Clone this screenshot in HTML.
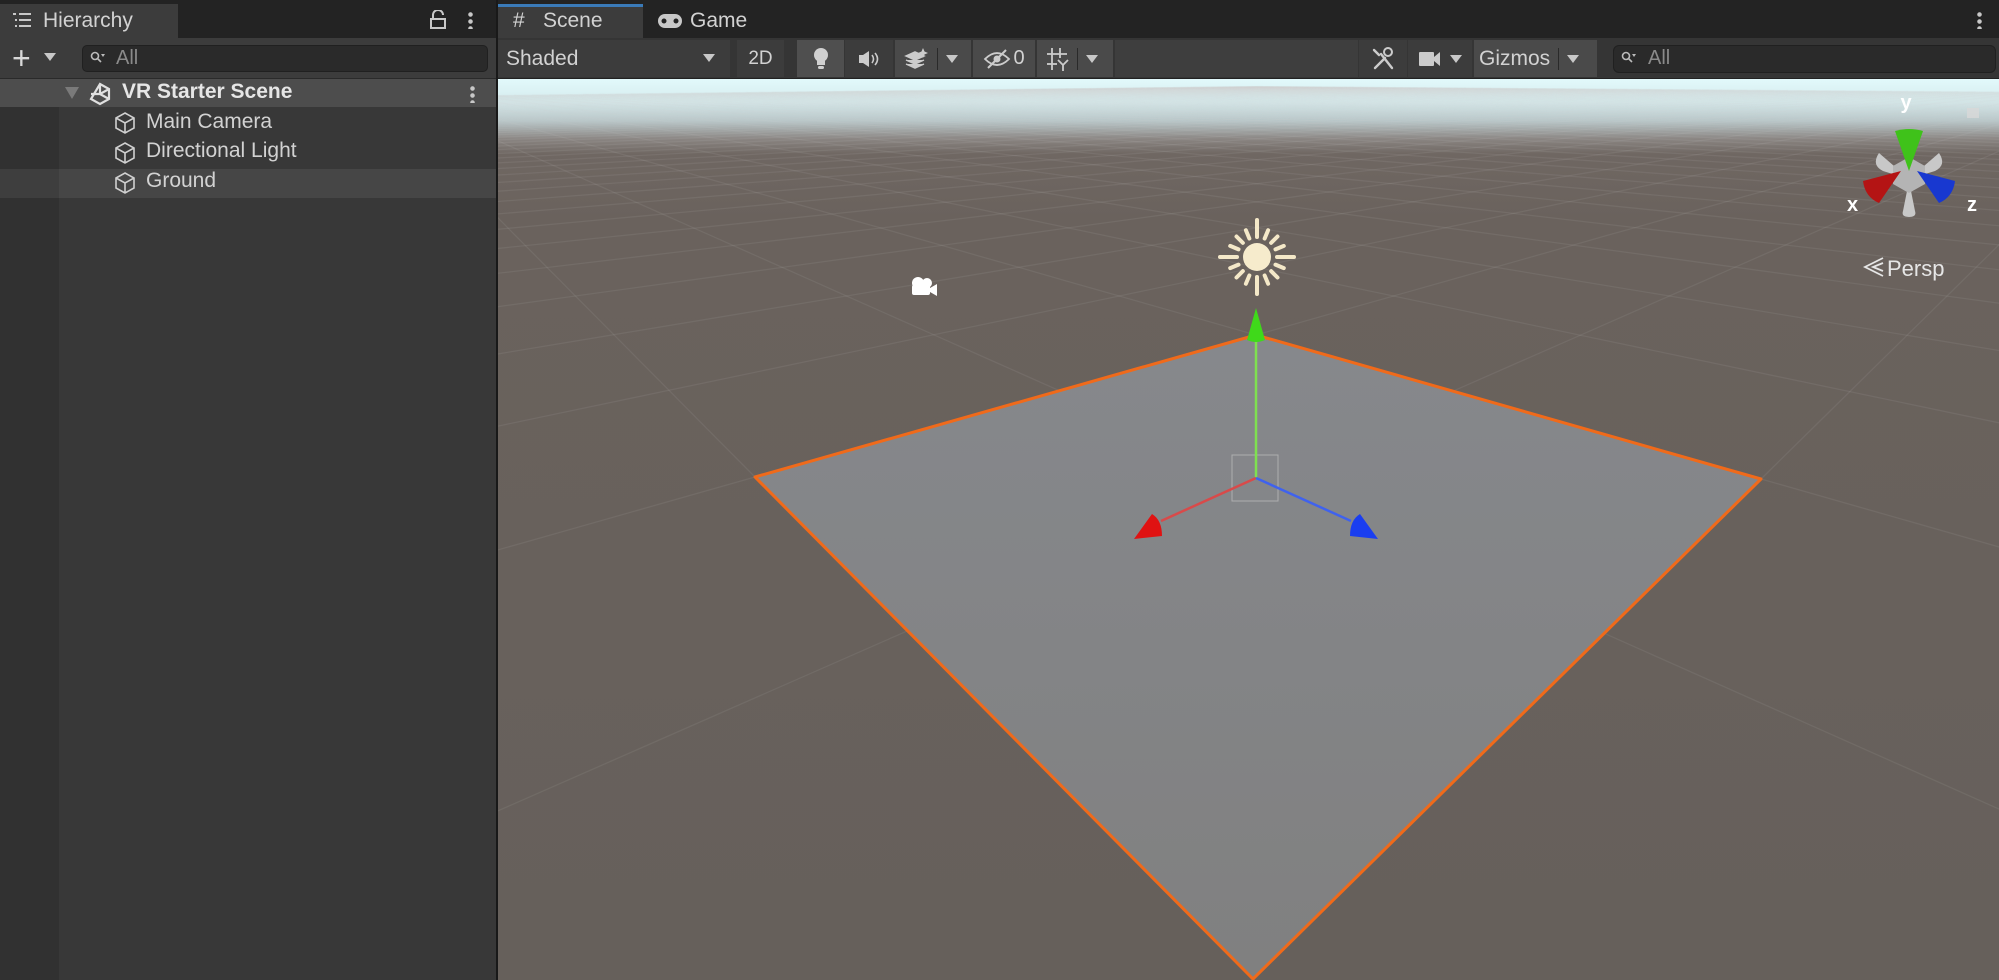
<!DOCTYPE html>
<html><head><meta charset="utf-8"><style>
*{margin:0;padding:0;box-sizing:border-box}
html,body{width:1999px;height:980px;overflow:hidden}
body{background:#191919;font-family:"Liberation Sans",sans-serif;color:#d2d2d2;font-size:21px;position:relative}
.a{position:absolute}
.btn{position:absolute;top:40px;height:37px;background:#3c3c3c;display:flex;align-items:center;justify-content:center}
</style></head><body>
<!-- tab bar -->
<div class="a" style="left:0;top:0;width:1999px;height:38px;background:#232323"></div>
<div class="a" style="left:0;top:4px;width:178px;height:34px;background:#3c3c3c"></div>
<svg class="a" style="left:13px;top:12px" width="20" height="16"><g stroke="#c8c8c8" stroke-width="2"><line x1="0" y1="2" x2="3" y2="2"/><line x1="6" y1="2" x2="18" y2="2"/><line x1="6" y1="8" x2="18" y2="8"/><line x1="6" y1="14" x2="18" y2="14"/><line x1="2" y1="8" x2="4" y2="8"/><line x1="2" y1="14" x2="4" y2="14"/></g></svg>
<div class="a" style="left:43px;top:9px">Hierarchy</div>
<svg class="a" style="left:430px;top:10px" width="16" height="20"><path d="M3 9 V5 a5 5 0 0 1 10 0" fill="none" stroke="#c8c8c8" stroke-width="2"/><rect x="1" y="9" width="14" height="9" fill="none" stroke="#c8c8c8" stroke-width="2"/></svg>
<div class="a" style="left:468px;top:11px;width:5px;height:18px;background:radial-gradient(circle,#c8c8c8 2px,transparent 2.5px) 0 0/5px 7px"></div>
<div class="a" style="left:498px;top:4px;width:145px;height:34px;background:#3c3c3c;border-top:3px solid #3a7ab8"></div>
<div class="a" style="left:513px;top:9px;font-size:21px">#</div>
<div class="a" style="left:543px;top:9px">Scene</div>
<svg class="a" style="left:657px;top:13px" width="26" height="16"><rect x="1" y="1" width="24" height="14" rx="7" fill="#c8c8c8"/><circle cx="7" cy="8" r="2.5" fill="#232323"/><circle cx="19" cy="8" r="2.5" fill="#232323"/></svg>
<div class="a" style="left:690px;top:9px">Game</div>
<div class="a" style="left:1977px;top:11px;width:5px;height:18px;background:radial-gradient(circle,#c8c8c8 2px,transparent 2.5px) 0 0/5px 7px"></div>

<!-- hierarchy -->
<div class="a" style="left:0;top:38px;width:496px;height:942px;background:#383838"></div>
<div class="a" style="left:0;top:38px;width:496px;height:41px;background:#3c3c3c;border-bottom:1px solid #2a2a2a"></div>
<div class="a" style="left:12px;top:42px;font-size:32px;color:#d8d8d8;line-height:32px">+</div>
<div class="a" style="left:44px;top:53px;width:0;height:0;border-left:6px solid transparent;border-right:6px solid transparent;border-top:8px solid #c8c8c8"></div>
<div class="a" style="left:82px;top:45px;width:406px;height:27px;background:#2a2a2a;border:1px solid #202020;border-radius:5px"></div>
<svg class="a" style="left:90px;top:51px" width="16" height="14"><circle cx="5" cy="5" r="3.5" fill="none" stroke="#bbb" stroke-width="1.6"/><line x1="7" y1="7" x2="11" y2="11" stroke="#bbb" stroke-width="1.6"/><path d="M11 3h4l-2 3z" fill="#bbb"/></svg>
<div class="a" style="left:116px;top:47px;color:#8a8a8a;font-size:20px">All</div>
<div class="a" style="left:0;top:79px;width:59px;height:901px;background:#313131"></div>
<div class="a" style="left:0;top:79px;width:496px;height:28px;background:#4d4d4d"></div>
<div class="a" style="left:59px;top:169px;width:437px;height:29px;background:#464646"></div>
<div class="a" style="left:0;top:169px;width:59px;height:29px;background:#3e3e3e"></div>
<div class="a" style="left:65px;top:87px;width:0;height:0;border-left:7px solid transparent;border-right:7px solid transparent;border-top:12px solid #7a7a7a"></div>
<svg class="a" style="left:88px;top:82px" width="24" height="24"><path d="M12 2 L21 7 V17 L12 22 L3 17 Z M12 2 V12 M3 12 H12 L21 17 M12 12 L21 7" fill="none" stroke="#e0e0e0" stroke-width="2.2"/></svg>
<div class="a" style="left:122px;top:80px;font-weight:bold;color:#e6e6e6">VR Starter Scene</div>
<div class="a" style="left:470px;top:85px;width:5px;height:18px;background:radial-gradient(circle,#c8c8c8 2px,transparent 2.5px) 0 0/5px 7px"></div>
<svg width="0" height="0" style="position:absolute"><defs><symbol id="cube" viewBox="0 0 24 24"><path d="M12 2 L21 7 V17 L12 22 L3 17 V7 Z M3 7 L12 12 L21 7 M12 12 V22" fill="none" stroke="#d0d0d0" stroke-width="1.6"/></symbol></defs></svg>
<svg class="a" style="left:113px;top:110px" width="24" height="26"><use href="#cube"/></svg>
<div class="a" style="left:146px;top:110px">Main Camera</div>
<svg class="a" style="left:113px;top:140px" width="24" height="26"><use href="#cube"/></svg>
<div class="a" style="left:146px;top:139px">Directional Light</div>
<svg class="a" style="left:113px;top:170px" width="24" height="26"><use href="#cube"/></svg>
<div class="a" style="left:146px;top:169px">Ground</div>
<div class="a" style="left:496px;top:0;width:2px;height:980px;background:#191919"></div>

<!-- scene toolbar -->
<div class="a" style="left:498px;top:38px;width:1501px;height:41px;background:#353535;border-bottom:1px solid #222"></div>
<div class="btn" style="left:498px;width:232px;justify-content:flex-start;padding-left:8px">Shaded</div>
<div class="a" style="left:703px;top:54px;border-left:6px solid transparent;border-right:6px solid transparent;border-top:8px solid #c8c8c8"></div>
<div class="btn" style="left:737px;width:47px;font-size:19px">2D</div>
<div class="btn" style="left:797px;width:47px;background:#4f4f4f"><svg width="18" height="24"><circle cx="9" cy="8" r="7" fill="#d0d0d0"/><rect x="5" y="12" width="8" height="6" fill="#d0d0d0"/><rect x="6" y="19" width="6" height="3" rx="1.5" fill="#d0d0d0"/></svg></div>
<div class="btn" style="left:845px;width:48px"><svg width="24" height="20"><rect x="2" y="6" width="4" height="8" fill="#ccc"/><path d="M6 6 L12 2 V18 L6 14Z" fill="#ccc"/><path d="M15 6 q3 4 0 8 M18 4 q5 6 0 12" fill="none" stroke="#ccc" stroke-width="1.6"/></svg></div>
<div class="btn" style="left:895px;width:76px;background:#4a4a4a;justify-content:flex-start;padding-left:8px"><svg width="28" height="24"><path d="M3 13 l9 4 9-4 M3 17 l9 4 9-4 M3 9 l9 4 9-4 -9-4z" fill="#ccc" stroke="#ccc" stroke-width="1.5"/><path d="M20 1 l1.5 3.5 3.5 1.5 -3.5 1.5 -1.5 3.5 -1.5-3.5 -3.5-1.5 3.5-1.5z" fill="#ccc"/></svg><div style="width:1px;height:22px;background:#2a2a2a;margin-left:6px"></div><div style="margin-left:8px;border-left:6px solid transparent;border-right:6px solid transparent;border-top:8px solid #c8c8c8"></div></div>
<div class="btn" style="left:973px;width:62px;background:#4a4a4a"><svg width="30" height="22"><path d="M2 11 q12-12 24 0 q-12 12 -24 0z" fill="none" stroke="#ccc" stroke-width="1.8"/><circle cx="14" cy="11" r="3.5" fill="#ccc"/><line x1="5" y1="20" x2="23" y2="2" stroke="#ccc" stroke-width="2"/></svg><span style="font-size:20px">0</span></div>
<div class="btn" style="left:1037px;width:76px;background:#4a4a4a;justify-content:flex-start;padding-left:8px"><svg width="26" height="26"><g stroke="#ccc" stroke-width="1.8" fill="none"><line x1="7" y1="2" x2="7" y2="24"/><line x1="15" y1="2" x2="15" y2="12"/><line x1="2" y1="8" x2="22" y2="8"/><line x1="2" y1="18" x2="12" y2="18"/><path d="M13 14 l5 5 5-5 M18 19 v6"/></g></svg><div style="width:1px;height:22px;background:#2a2a2a;margin-left:6px"></div><div style="margin-left:8px;border-left:6px solid transparent;border-right:6px solid transparent;border-top:8px solid #c8c8c8"></div></div>
<div class="btn" style="left:1115px;width:243px;background:#3e3e3e"></div>
<div class="btn" style="left:1359px;width:48px"><svg width="24" height="26"><g stroke="#ccc" stroke-width="2.4" stroke-linecap="round"><line x1="4" y1="22" x2="14" y2="12"/><line x1="10" y1="8" x2="21" y2="22"/><path d="M3 4 l5 5" /></g><circle cx="17" cy="6" r="4" fill="none" stroke="#ccc" stroke-width="2"/></svg></div>
<div class="btn" style="left:1408px;width:64px"><svg width="24" height="18"><rect x="1" y="2" width="15" height="14" rx="1" fill="#ccc"/><path d="M16 7 L22 2 V16 L16 11Z" fill="#ccc"/></svg><div style="margin-left:8px;border-left:6px solid transparent;border-right:6px solid transparent;border-top:8px solid #c8c8c8"></div></div>
<div class="btn" style="left:1474px;width:123px;background:#4a4a4a;justify-content:flex-start;padding-left:5px">Gizmos<div style="width:1px;height:22px;background:#2a2a2a;margin-left:8px"></div><div style="margin-left:8px;border-left:6px solid transparent;border-right:6px solid transparent;border-top:8px solid #c8c8c8"></div></div>
<div class="a" style="left:1613px;top:45px;width:383px;height:28px;background:#2a2a2a;border:1px solid #202020;border-radius:6px"></div>
<svg class="a" style="left:1621px;top:51px" width="16" height="14"><circle cx="5" cy="5" r="3.5" fill="none" stroke="#bbb" stroke-width="1.6"/><line x1="7" y1="7" x2="11" y2="11" stroke="#bbb" stroke-width="1.6"/><path d="M11 3h4l-2 3z" fill="#bbb"/></svg>
<div class="a" style="left:1648px;top:47px;color:#8a8a8a;font-size:20px">All</div>

<!-- scene view -->
<div class="a" style="left:498px;top:79px;width:1501px;height:901px;overflow:hidden;background:linear-gradient(#e2f9fb 0px,#d6ecee 22px,#b8c6c8 42px,#8a8582 60px,#6f6762 75px,#6a625d 140px,#66605b 901px)">
<svg id="sv" width="1501" height="901" style="position:absolute;left:0;top:0"></svg>
</div>
<script>
(function(){
var X=[1256,1761,1253,755],Y=[335,479,979,477];
var ox=498,oy=79;
var dx1=X[1]-X[2],dx2=X[3]-X[2],dx3=X[0]-X[1]+X[2]-X[3];
var dy1=Y[1]-Y[2],dy2=Y[3]-Y[2],dy3=Y[0]-Y[1]+Y[2]-Y[3];
var den=dx1*dy2-dx2*dy1;
var g=(dx3*dy2-dx2*dy3)/den,h=(dx1*dy3-dx3*dy1)/den;
var a=X[1]-X[0]+g*X[1],b=X[3]-X[0]+h*X[3],c=X[0];
var d=Y[1]-Y[0]+g*Y[1],e=Y[3]-Y[0]+h*Y[3],f=Y[0];
function P(u,v){var w=g*u+h*v+1;return [(a*u+b*v+c)/w-ox,(d*u+e*v+f)/w-oy,w];}
var s='',N=2,R=40;
function seg(fn){var pts=[];for(var t=-R;t<=R;t+=0.25){var p=fn(t);if(p[2]>0.12)pts.push(p[0].toFixed(1)+','+p[1].toFixed(1));}
 if(pts.length>1)s+='<polyline points="'+pts.join(' ')+'" fill="none" stroke="rgba(210,210,210,0.09)" stroke-width="1.3"/>';}
for(var k=-R*N;k<=R*N;k++){var q=k/N;seg(function(t){return P(q,t)});seg(function(t){return P(t,q)});}
var pl=[0,1,2,3].map(function(i){return (X[i]-ox)+','+(Y[i]-oy)}).join(' ');
s+='<defs><linearGradient id="pg" x1="0" y1="0" x2="0" y2="1"><stop offset="0" stop-color="#86888c"/><stop offset="1" stop-color="#808080"/></linearGradient></defs>';
s+='<polygon points="'+pl+'" fill="url(#pg)" stroke="#f06a1a" stroke-width="3" stroke-linejoin="round"/>';
// sun
var cx=1257-ox,cy=257-oy,r='';
for(var i=0;i<16;i++){var an=i*Math.PI/8,l1=20,l2=(i%4==0)?37:29;r+='<line x1="'+(cx+l1*Math.cos(an))+'" y1="'+(cy+l1*Math.sin(an))+'" x2="'+(cx+l2*Math.cos(an))+'" y2="'+(cy+l2*Math.sin(an))+'" stroke="#f4e8c8" stroke-width="4" stroke-linecap="round"/>';}
s+=r+'<circle cx="'+cx+'" cy="'+cy+'" r="14" fill="#f6ebcc"/>';
// camera icon
var kx=924-ox,ky=289-oy;
s+='<circle cx="'+(kx-6)+'" cy="'+(ky-6)+'" r="6" fill="#fff"/><circle cx="'+(kx+3)+'" cy="'+(ky-6)+'" r="5" fill="#fff"/><rect x="'+(kx-12)+'" y="'+(ky-4)+'" width="18" height="10" rx="2" fill="#fff"/><path d="M'+(kx+6)+' '+(ky-1)+' l7 -4 v12 l-7 -4z" fill="#fff"/>';
// move gizmo
var mx=1256-ox,my=478-oy;
s+='<rect x="'+(mx-24)+'" y="'+(my-23)+'" width="46" height="46" fill="none" stroke="#c8c8c8" stroke-opacity=".6" stroke-width="1"/>';
s+='<line x1="'+mx+'" y1="'+my+'" x2="'+mx+'" y2="'+(my-150)+'" stroke="#7fe050" stroke-width="2.5"/>';
s+='<path d="M'+mx+' '+(my-170)+' l-9 32 q9 4 18 0z" fill="#3fd91a"/>';
s+='<line x1="'+mx+'" y1="'+my+'" x2="'+(mx-95)+'" y2="'+(my+43)+'" stroke="#d84a4a" stroke-width="2.5"/>';
s+='<path d="M'+(mx-122)+' '+(my+61)+' l18 -25 q10 6 10 22z" fill="#e01212"/>';
s+='<line x1="'+mx+'" y1="'+my+'" x2="'+(mx+95)+'" y2="'+(my+43)+'" stroke="#3f62ee" stroke-width="2.5"/>';
s+='<path d="M'+(mx+122)+' '+(my+61)+' l-18 -25 q-10 6 -10 22z" fill="#1a3ef0"/>';
// orientation gizmo
var gx=1909-ox,gy=175-oy;
s+='<g fill="#c8c8c8"><path d="M'+(gx-30)+' '+(gy-22)+' q-8 12 4 18 l26 8 z"/><path d="M'+(gx+30)+' '+(gy-22)+' q8 12 -4 18 l-26 8 z"/><path d="M'+gx+' '+(gy+42)+' q-8 0 -6 -6 l6 -30 6 30 q2 6 -6 6z"/><polygon points="'+(gx-16)+','+(gy-9)+' '+gx+','+(gy-18)+' '+(gx+16)+','+(gy-9)+' '+(gx+16)+','+(gy+9)+' '+gx+','+(gy+18)+' '+(gx-16)+','+(gy+9)+'" fill="#b4b4b4"/></g>';
s+='<path d="M'+gx+' '+(gy-4)+' l-14 -40 q14 -4 28 0z" fill="#3fc21a"/>';
s+='<path d="M'+(gx-8)+' '+(gy-4)+' l-38 10 q2 16 16 22z" fill="#b41414"/>';
s+='<path d="M'+(gx+8)+' '+(gy-4)+' l38 10 q-2 16 -16 22z" fill="#1838d0"/>';
s+='<text x="'+(gx-3)+'" y="'+(gy-66)+'" fill="#fff" font-size="20" font-weight="bold" font-family="Liberation Sans" text-anchor="middle">y</text>';
s+='<text x="'+(gx-62)+'" y="'+(gy+36)+'" fill="#fff" font-size="20" font-weight="bold" font-family="Liberation Sans">x</text>';
s+='<text x="'+(gx+58)+'" y="'+(gy+36)+'" fill="#fff" font-size="20" font-weight="bold" font-family="Liberation Sans">z</text>';
s+='<path d="M'+(1883-ox)+' '+(258-oy)+' l-18 9 18 9 M'+(1883-ox)+' '+(263-oy)+' l-10 4 10 4" fill="none" stroke="#e6e6e6" stroke-width="1.8"/>';
s+='<text x="'+(1887-ox)+'" y="'+(276-oy)+'" fill="#e6e6e6" font-size="22" font-family="Liberation Sans">Persp</text>';
s+='<rect x="'+(1967-ox)+'" y="'+(108-oy)+'" width="12" height="10" fill="#d8d8d8" opacity=".8"/>';
document.getElementById('sv').innerHTML=s;
})();
</script>
</body></html>
